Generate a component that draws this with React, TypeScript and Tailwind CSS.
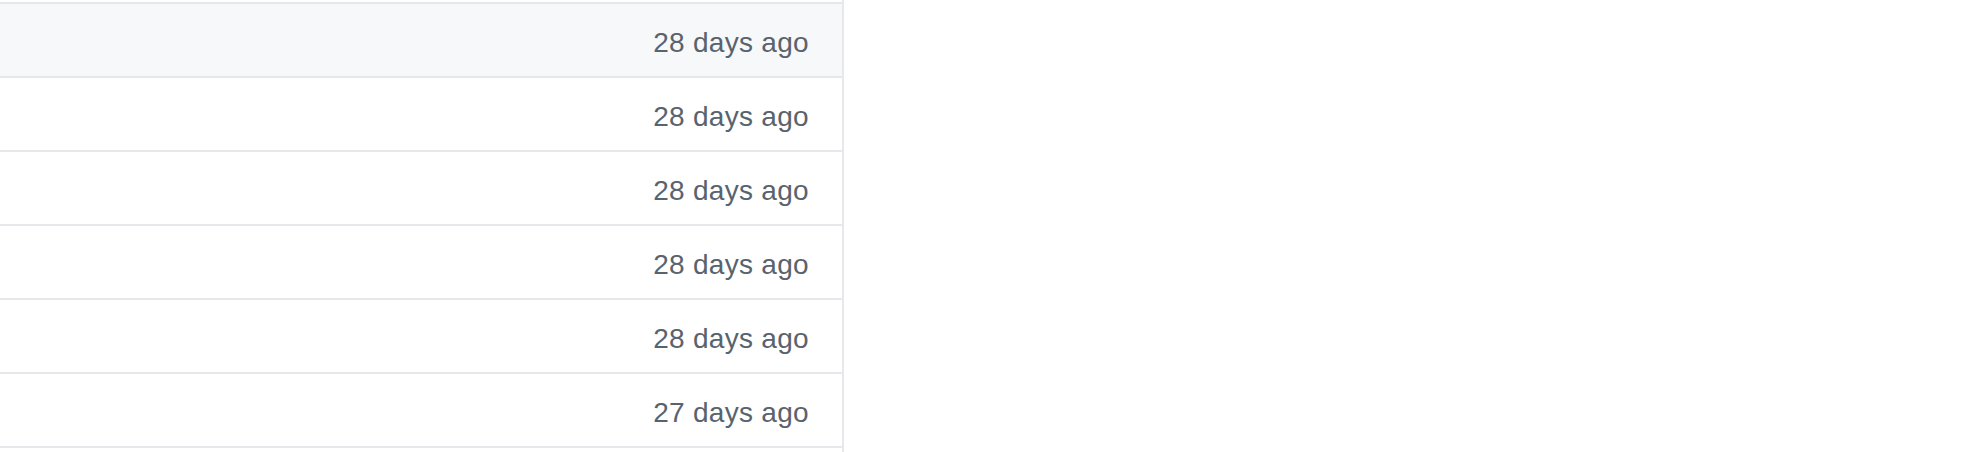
const ROWS = [
    { age: '28 days ago', active: true },
    { age: '28 days ago', active: false },
    { age: '28 days ago', active: false },
    { age: '28 days ago', active: false },
    { age: '28 days ago', active: false },
    { age: '27 days ago', active: false },
]

function App() {
    return (
        <div className="min-h-screen bg-white font-['Liberation_Sans',Arial,sans-serif]">
            <div className="w-[844px] border-r-2 border-[#e6e8eb]">
                <div className="h-[2px]" />
                {ROWS.map((row, i) => (
                    <div
                        key={i}
                        className={
                            row.active
                                ? 'flex h-[74px] items-center justify-end border-t-2 border-[#e6e8eb] bg-[#f6f8fa] pt-[5px] pr-[33px]'
                                : 'flex h-[74px] items-center justify-end border-t-2 border-[#e6e8eb] bg-white pt-[5px] pr-[33px]'
                        }
                    >
                        <span className="text-[28px] leading-none tracking-[0.3px] text-[#59636e]">{row.age}</span>
                    </div>
                ))}
                <div className="h-[74px] border-t-2 border-[#e6e8eb]" />
            </div>
        </div>
    )
}

export default App
